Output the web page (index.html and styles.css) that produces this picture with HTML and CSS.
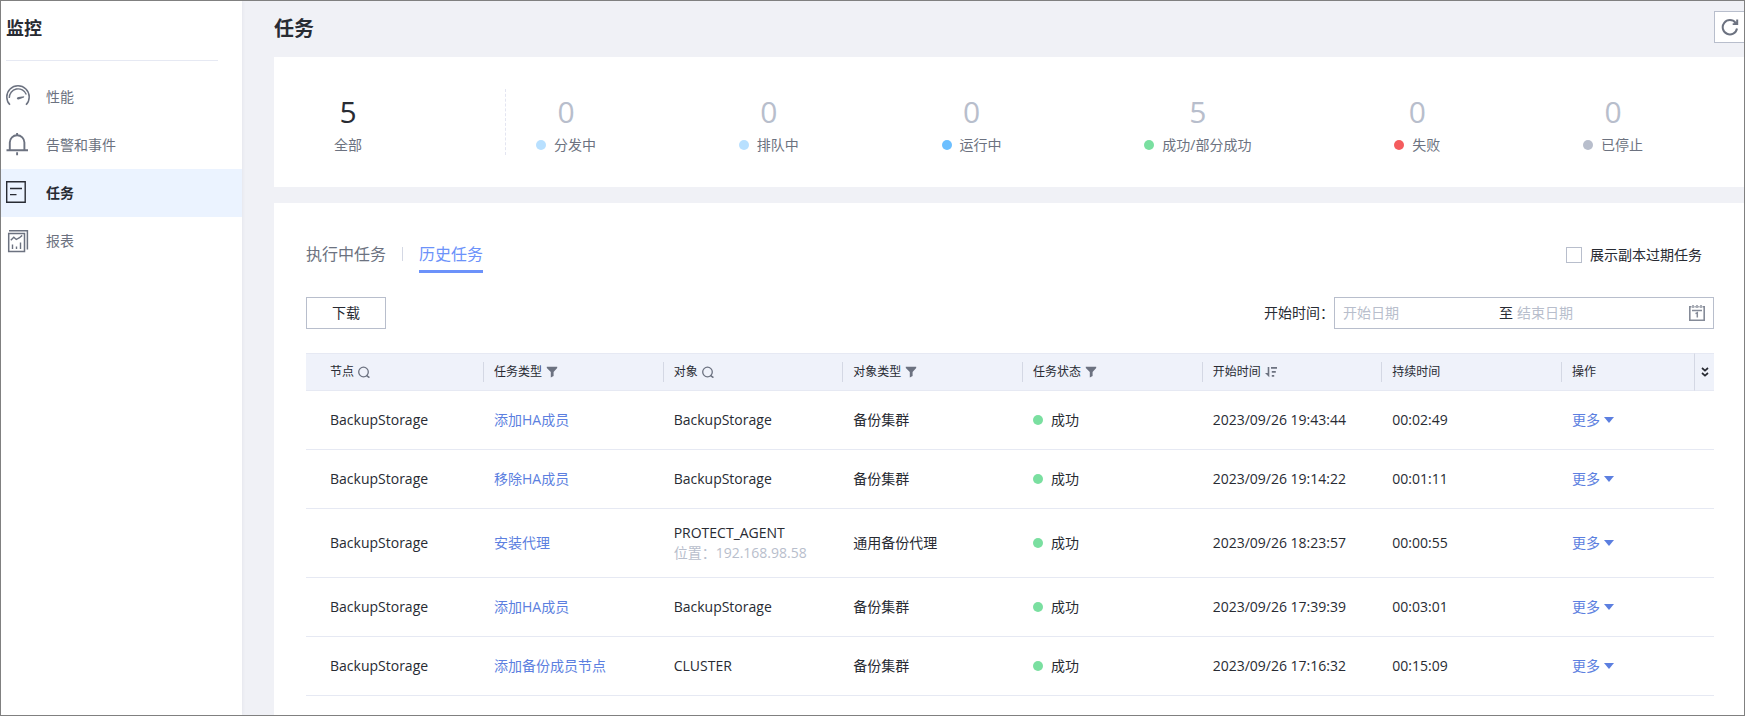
FILE: index.html
```html
<!DOCTYPE html>
<html lang="zh-CN">
<head>
<meta charset="utf-8">
<title>任务</title>
<link rel="stylesheet" href="styles.css">
</head>
<body>
<svg class="sprite" aria-hidden="true">
  <symbol id="i-search" viewBox="0 0 12 12"><circle cx="5.5" cy="6" r="4.8" fill="none" stroke="currentColor" stroke-width="1.3"/><path d="M8.400 9.400l3 2.300" fill="none" stroke="currentColor" stroke-width="1.500"/></symbol>
  <symbol id="i-filter" viewBox="0 0 12 12"><path d="M.8.8h10.400v1.200L7.600 5.900v4.200L4.800 11.600V5.900L.8 2z" fill="currentColor"/></symbol>
  <symbol id="i-sort" viewBox="0 0 12 12"><path d="M0 7h2.700V1h1.600v10.200zM6 1h6v1.700H6zM6.800 5h4v1.700h-4zM6.800 9h2.400v1.700H6.800z" fill="currentColor"/></symbol>
  <symbol id="i-caret" viewBox="0 0 10 6"><path d="M0 0h10L5 6z" fill="currentColor"/></symbol>
</svg>
<div class="app">
  <aside class="sidebar">
    <h2 class="sidebar-title">监控</h2>
    <nav class="nav">
      <a class="nav-item" href="#">
        <svg class="nav-icon" viewBox="0 0 24 24"><g fill="none" stroke="currentColor"><path d="M4 19.800A11.200 11.200 0 1 1 20 19.800" stroke-width="1.500"/><path d="M3.300 13A8.800 8.800 0 0 1 20.300 9.500" stroke-width="1.400"/></g><path d="M10.800 13.300Q11 12 12.500 11.900L18.200 11.200 18 12.600 12.600 14.600q-1.800 0-1.800-1.300z" fill="currentColor"/></svg>
        性能</a>
      <a class="nav-item" href="#">
        <svg class="nav-icon" viewBox="0 0 24 24"><g fill="none" stroke="currentColor" stroke-width="1.900"><path d="M.5 17.300h21.500M3.800 17V9.500a7.300 7.300 0 0 1 14.600 0V17"/><path d="M11.100 0v2.500M11.100 19.300v3"/></g></svg>
        告警和事件</a>
      <a class="nav-item nav-item-active" href="#">
        <svg class="nav-icon" viewBox="0 0 24 24"><g fill="none" stroke="currentColor"><path d="M.7.7h18.500v20.600H.7z" stroke-width="1.400"/><path d="M4 7.500h12M4 13.600h6.500" stroke-width="1.300"/></g></svg>
        任务</a>
      <a class="nav-item" href="#">
        <svg class="nav-icon" viewBox="0 0 24 24"><g fill="none" stroke="currentColor" stroke-width="1.500"><path d="M2.700 4.600h15.800v17.800H2.700zM3 1.800h18.400v18.600"/><path d="M4.800 11.200l3-3 2.500 2.300 3.200-1.800 2.700-2.300M6.500 20v-4.500M10.500 20v-2.500M14.500 20v-6.500" stroke-width="1.400"/></g></svg>
        报表</a>
    </nav>
  </aside>
  <main class="main">
    <header class="page-head">
      <h1 class="page-title">任务</h1>
      <button class="refresh" type="button" aria-label="刷新">
        <svg class="refresh-icon" viewBox="0 0 18 18"><path d="M16 10.500A7.200 7.200 0 1 1 14.600 4.800" fill="none" stroke="currentColor" stroke-width="2"/><path d="M17.200 1.500v5.500h-5.500V5.200h1.500l2-1.500V1.500z" fill="currentColor"/></svg>
      </button>
    </header>

    <section class="card summary">
      <div class="summary-total">
        <div class="stat stat-total"><span class="stat-value">5</span><span class="stat-label">全部</span></div>
      </div>
      <div class="summary-list">
        <div class="stat"><span class="stat-value">0</span><span class="stat-label"><i class="dot dot-light"></i>分发中</span></div>
        <div class="stat"><span class="stat-value">0</span><span class="stat-label"><i class="dot dot-light"></i>排队中</span></div>
        <div class="stat"><span class="stat-value">0</span><span class="stat-label"><i class="dot dot-blue"></i>运行中</span></div>
        <div class="stat"><span class="stat-value">5</span><span class="stat-label"><i class="dot dot-green"></i>成功/部分成功</span></div>
        <div class="stat"><span class="stat-value">0</span><span class="stat-label"><i class="dot dot-red"></i>失败</span></div>
        <div class="stat"><span class="stat-value">0</span><span class="stat-label"><i class="dot dot-grey"></i>已停止</span></div>
      </div>
    </section>

    <section class="card tasks">
      <div class="bar tabs-bar">
        <div class="tabs" role="tablist">
          <button class="tab" type="button" role="tab">执行中任务</button>
          <span class="tab-divider"></span>
          <button class="tab tab-active" type="button" role="tab" aria-selected="true">历史任务</button>
        </div>
        <label class="check"><input class="check-box" type="checkbox">展示副本过期任务</label>
      </div>
      <div class="bar tools-bar">
        <button class="download" type="button">下载</button>
        <div class="period">
          <label for="start-date">开始时间：</label>
          <div class="range">
            <input class="range-input" id="start-date" type="text" placeholder="开始日期">
            <label class="range-to" for="end-date">至</label>
            <input class="range-input" id="end-date" type="text" placeholder="结束日期">
            <svg class="range-icon" viewBox="0 0 16 16"><g fill="none" stroke="currentColor"><path d="M2.500 1.700H.8v13.500h14.400V1.700h-1.700" stroke-width="1.600"/><path d="M4 0v3M8 0v3M12 0v3" stroke-width="1.400"/><path d="M5.500 1.700h1.200M9.300 1.700h1.200M3 5.500h10M6.500 8.700L8.300 7.800V12.500" stroke-width="1.500"/></g></svg>
          </div>
        </div>
      </div>

      <table class="table">
        <colgroup><col class="col-node"><col><col><col><col><col><col><col class="col-action"><col class="col-more"></colgroup>
        <thead>
          <tr>
            <th scope="col"><div class="th">节点<svg class="th-icon"><use href="#i-search"/></svg></div></th>
            <th scope="col"><div class="th">任务类型<svg class="th-icon"><use href="#i-filter"/></svg></div></th>
            <th scope="col"><div class="th">对象<svg class="th-icon"><use href="#i-search"/></svg></div></th>
            <th scope="col"><div class="th">对象类型<svg class="th-icon"><use href="#i-filter"/></svg></div></th>
            <th scope="col"><div class="th">任务状态<svg class="th-icon"><use href="#i-filter"/></svg></div></th>
            <th scope="col"><div class="th">开始时间<svg class="th-icon"><use href="#i-sort"/></svg></div></th>
            <th scope="col"><div class="th">持续时间</div></th>
            <th scope="col"><div class="th th-last">操作</div></th>
            <th class="th-toggle"><button class="toggle" type="button" aria-label="列设置"><svg class="toggle-icon" viewBox="0 0 8 10"><path d="M1 1l3 2.600L7 1M1 6l3 2.600L7 6" fill="none" stroke="currentColor" stroke-width="1.700"/></svg></button></th>
          </tr>
        </thead>
        <tbody>
          <tr><td>BackupStorage</td><td><a class="link" href="#">添加HA成员</a></td><td>BackupStorage</td><td>备份集群</td><td><span class="status"><i class="dot dot-green"></i>成功</span></td><td>2023/09/26 19:43:44</td><td>00:02:49</td><td colspan="2"><button class="more" type="button">更多<svg class="caret"><use href="#i-caret"/></svg></button></td></tr>
          <tr><td>BackupStorage</td><td><a class="link" href="#">移除HA成员</a></td><td>BackupStorage</td><td>备份集群</td><td><span class="status"><i class="dot dot-green"></i>成功</span></td><td>2023/09/26 19:14:22</td><td>00:01:11</td><td colspan="2"><button class="more" type="button">更多<svg class="caret"><use href="#i-caret"/></svg></button></td></tr>
          <tr><td>BackupStorage</td><td><a class="link" href="#">安装代理</a></td><td>PROTECT_AGENT<div class="sub">位置：192.168.98.58</div></td><td>通用备份代理</td><td><span class="status"><i class="dot dot-green"></i>成功</span></td><td>2023/09/26 18:23:57</td><td>00:00:55</td><td colspan="2"><button class="more" type="button">更多<svg class="caret"><use href="#i-caret"/></svg></button></td></tr>
          <tr><td>BackupStorage</td><td><a class="link" href="#">添加HA成员</a></td><td>BackupStorage</td><td>备份集群</td><td><span class="status"><i class="dot dot-green"></i>成功</span></td><td>2023/09/26 17:39:39</td><td>00:03:01</td><td colspan="2"><button class="more" type="button">更多<svg class="caret"><use href="#i-caret"/></svg></button></td></tr>
          <tr><td>BackupStorage</td><td><a class="link" href="#">添加备份成员节点</a></td><td>CLUSTER</td><td>备份集群</td><td><span class="status"><i class="dot dot-green"></i>成功</span></td><td>2023/09/26 17:16:32</td><td>00:15:09</td><td colspan="2"><button class="more" type="button">更多<svg class="caret"><use href="#i-caret"/></svg></button></td></tr>
        </tbody>
      </table>
    </section>
  </main>
</div>
</body>
</html>
```

FILE: styles.css
```css
* { box-sizing: border-box; }

body {
  margin: 0;
  font: 14px/20px "Open Sans", "Noto Sans CJK SC", sans-serif;
  color: #282b33;
}

button, input { font: inherit; color: inherit; }
button { padding: 0; border: 0; background: none; cursor: pointer; }
a { color: inherit; text-decoration: none; }
h1, h2 { margin: 0; }

.sprite { display: none; }

.app {
  display: flex;
  height: 100vh;
  overflow: hidden;
  border: 1px solid #808080;
  background: #f0f1f6;
}

/* Sidebar */
.sidebar {
  flex: none;
  width: 241px;
  background: #fff;
  box-shadow: 0 0 4px rgba(40, 50, 80, 0.08);
}
.sidebar-title {
  margin: 0 24px 12px 5px;
  padding: 14px 0 19px;
  border-bottom: 1px solid #e6e9f3;
  font-size: 18px;
  line-height: 26px;
}
.nav-item {
  display: flex;
  align-items: center;
  gap: 16px;
  height: 48px;
  padding-left: 5px;
  color: #6c7280;
}
.nav-item-active { background: #ebf3ff; color: #282b33; font-weight: 700; }
.nav-icon { width: 24px; height: 24px; }

/* Page head */
.main {
  flex: 1;
  min-width: 0;
  display: flex;
  flex-direction: column;
  padding-left: 32px;
}
.page-head {
  flex: none;
  display: flex;
  justify-content: space-between;
  align-items: flex-start;
  height: 56px;
  padding-top: 10px;
}
.page-title { font-size: 20px; line-height: 36px; }
.refresh {
  display: flex;
  align-items: center;
  width: 30px;
  height: 32px;
  padding-left: 6px;
  border: 1px solid #b8becc;
  border-right: 0;
  background: #fff;
  color: #6c7280;
}
.refresh-icon { width: 18px; height: 18px; }

.card { background: #fff; }

/* Summary */
.summary {
  flex: none;
  display: flex;
  margin-bottom: 16px;
  padding: 32px 0;
}
.summary-total {
  width: 232px;
  padding-left: 60px;
  border-right: 1px dashed #e3e5f1;
}
.summary-list {
  flex: 1;
  display: flex;
  justify-content: space-between;
  padding: 0 101px 0 30px;
}
.stat {
  display: inline-flex;
  flex-direction: column;
  align-items: center;
}
.stat-value { font-size: 30px; line-height: 46px; color: #b8becc; }
.stat-total .stat-value { color: #282b33; }
.stat-label { display: flex; align-items: center; gap: 8px; color: #6c7280; }

.dot { flex: none; width: 10px; height: 10px; border-radius: 50%; }
.dot-light { background: #b8e0ff; }
.dot-blue { background: #6cbfff; }
.dot-green { background: #7adfa0; }
.dot-red { background: #f45c5e; }
.dot-grey { background: #b8becc; }

/* Task list */
.tasks { flex: 1; padding: 34px 30px 0 32px; }
.bar { display: flex; justify-content: space-between; align-items: center; }
.tabs-bar { margin-bottom: 24px; align-items: flex-start; }
.tabs { display: flex; align-items: flex-start; gap: 16px; }
.tab {
  height: 36px;
  padding: 5px 0 4px;
  border-bottom: 3px solid transparent;
  font-size: 16px;
  line-height: 24px;
  color: #6c7280;
}
.tab-active { border-color: #6c92fa; color: #6c92fa; }
.tab-divider { width: 1px; height: 14px; margin-top: 10px; background: #d4d8e4; }
.check { display: flex; align-items: center; gap: 8px; padding: 8px 12px 0 0; }
.check-box {
  appearance: none;
  width: 16px;
  height: 16px;
  margin: 0;
  border: 1px solid #b8becc;
  background: #fff;
}

.tools-bar { margin-bottom: 24px; }
.download { width: 80px; height: 32px; border: 1px solid #b8becc; background: #fff; }
.period { display: flex; align-items: center; }
.range {
  display: flex;
  align-items: center;
  width: 380px;
  height: 32px;
  padding: 0 8px;
  border: 1px solid #b8becc;
}
.range-input {
  width: 156px;
  padding: 0;
  border: 0;
  outline: 0;
  background: none;
}
.range-input::placeholder { color: #b8becc; }
.range-to { margin-right: 4px; }
.range-icon { width: 16px; height: 16px; margin-left: auto; color: #858b98; }

.table { width: 100%; table-layout: fixed; border-collapse: separate; border-spacing: 0; }
.col-node { width: 178px; }
.col-action { width: 132px; }
.col-more { width: 20px; }

th {
  height: 38px;
  padding: 0;
  border: solid #e6e9f3;
  border-width: 1px 0;
  background: #eff2fa;
  font-size: 12px;
  font-weight: 400;
  text-align: left;
}
.th {
  display: flex;
  align-items: center;
  gap: 4px;
  height: 20px;
  padding-left: 10px;
  border-right: 1px solid #d4d8e4;
}
.th-last { border-right: 0; }
.th-icon { width: 12px; height: 12px; color: #6c7280; }
.th-toggle { border-left: 1px solid #d4d8e4; }
.toggle { display: flex; justify-content: center; width: 100%; }
.toggle-icon { width: 8px; height: 10px; }

td { height: 59px; padding: 14px 10px; border-bottom: 1px solid #e6e9f3; }
th:first-child .th, td:first-child { padding-left: 24px; }
.sub { color: #b8becc; }
.link, .more { color: #5c7fe0; }
.status { display: flex; align-items: center; gap: 8px; }
.more { display: flex; align-items: center; gap: 4px; }
.caret { width: 10px; height: 6px; }
```
